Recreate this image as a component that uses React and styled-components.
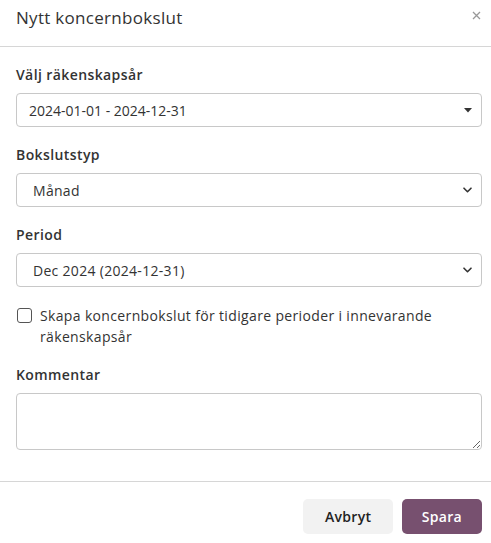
import React from 'react';
import styled, { createGlobalStyle } from 'styled-components';

const Global = createGlobalStyle`
    body {
        margin: 0;
        background: #fff;
        font-family: 'Open Sans', 'Liberation Sans', sans-serif;
        color: #333;
    }
`;

// 모달 전체
const Dialog = styled.div`
    width: 491px;
    background: #fff;
    display: flex;
    flex-direction: column;
`;

const Header = styled.div`
    height: 47px;
    display: flex;
    align-items: flex-start;
    justify-content: space-between;
    padding: 7px 9px 0 16px;
    box-sizing: border-box;
    border-bottom: 1px solid #d6d6d6;
`;

const Title = styled.h4`
    margin: 0;
    font-size: 17px;
    line-height: 22px;
    font-weight: 500;
    letter-spacing: 0.3px;
    color: #333;
`;

const Close = styled.button`
    border: none;
    background: none;
    padding: 0;
    margin-top: 2px;
    width: 12px;
    height: 12px;
    display: flex;
    align-items: center;
    justify-content: center;
    cursor: pointer;
`;

const Body = styled.div`
    padding: 18px 9px 31px 16px;
    display: flex;
    flex-direction: column;
    gap: 18px;
`;

const Field = styled.div`
    display: flex;
    flex-direction: column;
    gap: 8px;
`;

const Label = styled.label`
    font-size: 14px;
    line-height: 20px;
    font-weight: 600;
    letter-spacing: 0.4px;
    color: #333;
`;

const SelectBox = styled.div`
    height: 34px;
    box-sizing: border-box;
    border: 1px solid #c8c8c8;
    border-radius: 4px;
    display: flex;
    align-items: center;
    justify-content: space-between;
    padding: 0 9px 0 ${p => p.$indent}px;
    font-size: 14px;
    letter-spacing: ${p => p.$spacing}px;
    color: #333;
`;

const CheckRow = styled.label`
    display: flex;
    align-items: flex-start;
    gap: 8px;
    font-size: 14px;
    line-height: 21px;
    letter-spacing: 0.35px;
    color: #333;
`;

const Box = styled.span`
    flex: none;
    width: 15px;
    height: 15px;
    margin: 3px 0 0 1px;
    box-sizing: border-box;
    border: 1px solid #555;
    border-radius: 3px;
`;

const TextArea = styled.textarea`
    height: 57px;
    box-sizing: border-box;
    border: 1px solid #c8c8c8;
    border-radius: 4px;
    resize: vertical;
    font-family: inherit;
    font-size: 14px;
    padding: 6px 10px;
    outline: none;
`;

const Footer = styled.div`
    border-top: 1px solid #d6d6d6;
    padding: 17px 9px 16px 16px;
    display: flex;
    justify-content: flex-end;
    gap: 9px;
`;

const Button = styled.button`
    height: 35px;
    padding: 0 ${p => p.$pad}px;
    border: none;
    border-radius: 5px;
    font-family: inherit;
    font-size: 14px;
    font-weight: 600;
    letter-spacing: 0.3px;
    background: ${p => (p.$primary ? '#77506f' : '#f2f2f2')};
    color: ${p => (p.$primary ? '#fff' : '#222')};
`;

const Caret = () => (
    <svg width="8" height="5" viewBox="0 0 8 5">
        <path d="M0 0h8L4 4.5z" fill="#333" />
    </svg>
);

const Chevron = () => (
    <svg width="9" height="6" viewBox="0 0 9 6">
        <path d="M1 1.2l3.5 3.5 3.5-3.5" fill="none" stroke="#333" strokeWidth="1.6" strokeLinecap="round" strokeLinejoin="round" />
    </svg>
);

export default function App() {
    return (
        <Dialog>
            <Global />
            <Header>
                <Title>Nytt koncernbokslut</Title>
                <Close>
                    <svg width="9" height="9" viewBox="0 0 9 9">
                        <path d="M1 1l7 7M8 1L1 8" stroke="#999" strokeWidth="1.3" />
                    </svg>
                </Close>
            </Header>
            <Body>
                <Field>
                    <Label>Välj räkenskapsår</Label>
                    <SelectBox $indent={12} $spacing={0}>
                        2024-01-01 - 2024-12-31
                        <Caret />
                    </SelectBox>
                </Field>
                <Field>
                    <Label>Bokslutstyp</Label>
                    <SelectBox $indent={16} $spacing={0.3}>
                        Månad
                        <Chevron />
                    </SelectBox>
                </Field>
                <Field>
                    <Label>Period</Label>
                    <SelectBox $indent={16} $spacing={0.3}>
                        Dec 2024 (2024-12-31)
                        <Chevron />
                    </SelectBox>
                </Field>
                <CheckRow>
                    <Box />
                    <span>Skapa koncernbokslut för tidigare perioder i innevarande räkenskapsår</span>
                </CheckRow>
                <Field>
                    <Label>Kommentar</Label>
                    <TextArea />
                </Field>
            </Body>
            <Footer>
                <Button $pad={21.5}>Avbryt</Button>
                <Button $pad={20} $primary>Spara</Button>
            </Footer>
        </Dialog>
    );
}
